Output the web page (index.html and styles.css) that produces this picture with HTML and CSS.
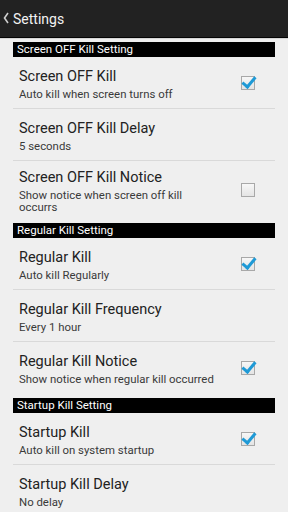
FILE: index.html
```html
<!DOCTYPE html>
<html lang="en">
<head>
    <meta charset="UTF-8">
    <meta name="viewport" content="width=device-width, initial-scale=1.0">
    <title>Settings</title>
    <link rel="stylesheet" href="styles.css">
</head>
<body>
    <div class="action-bar">
        <svg class="back" width="6" height="12" viewBox="0 0 6 12">
            <path d="M5 1 L1.5 6 L5 11" fill="none" stroke="#cfcfcf" stroke-width="1.6"/>
        </svg>
        <h1>Settings</h1>
    </div>

    <div class="section">
        <div class="section-header">Screen OFF Kill Setting</div>
        <div class="pref">
            <div class="pref-text">
                <div class="pref-title">Screen OFF Kill</div>
                <div class="pref-summary">Auto kill when screen turns off</div>
            </div>
            <span class="check checked"></span>
        </div>
        <div class="pref">
            <div class="pref-text">
                <div class="pref-title">Screen OFF Kill Delay</div>
                <div class="pref-summary">5 seconds</div>
            </div>
        </div>
        <div class="pref">
            <div class="pref-text">
                <div class="pref-title">Screen OFF Kill Notice</div>
                <div class="pref-summary">Show notice when screen off kill occurrs</div>
            </div>
            <span class="check"></span>
        </div>
    </div>

    <div class="section">
        <div class="section-header">Regular Kill Setting</div>
        <div class="pref">
            <div class="pref-text">
                <div class="pref-title">Regular Kill</div>
                <div class="pref-summary">Auto kill Regularly</div>
            </div>
            <span class="check checked"></span>
        </div>
        <div class="pref">
            <div class="pref-text">
                <div class="pref-title">Regular Kill Frequency</div>
                <div class="pref-summary">Every 1 hour</div>
            </div>
        </div>
        <div class="pref">
            <div class="pref-text">
                <div class="pref-title">Regular Kill Notice</div>
                <div class="pref-summary">Show notice when regular kill occurred</div>
            </div>
            <span class="check checked"></span>
        </div>
    </div>

    <div class="section">
        <div class="section-header">Startup Kill Setting</div>
        <div class="pref">
            <div class="pref-text">
                <div class="pref-title">Startup Kill</div>
                <div class="pref-summary">Auto kill on system startup</div>
            </div>
            <span class="check checked"></span>
        </div>
        <div class="pref">
            <div class="pref-text">
                <div class="pref-title">Startup Kill Delay</div>
                <div class="pref-summary">No delay</div>
            </div>
        </div>
    </div>
</body>
</html>
```

FILE: styles.css
```css
* {
    margin: 0;
    padding: 0;
    box-sizing: border-box;
    font-family: Roboto, 'Noto Sans', sans-serif;
}

body {
    background-color: #efefef;
    color: #1a1a1a;
    overflow: hidden;
}

.action-bar {
    height: 38px;
    background-color: #222222;
    border-bottom: 1px solid #050505;
    box-shadow: 0 1px 0 #d6d6d6;
    display: flex;
    align-items: center;
    padding-left: 3px;
}

.action-bar .back {
    margin-right: 4px;
    margin-top: -1px;
}

.action-bar h1 {
    color: #f2f2f2;
    font-size: 14px;
    font-weight: normal;
}

.section {
    margin: 4px 13px 0;
}

.section-header {
    height: 15px;
    background-color: #000;
    color: #fff;
    font-size: 11.5px;
    line-height: 15px;
    padding-left: 4px;
}

.pref {
    display: flex;
    align-items: center;
    min-height: 52px;
    padding: 6px 20px 6px 6px;
    border-bottom: 1px solid #d9d9d9;
}

.pref:last-child {
    border-bottom: none;
}

.pref-text {
    flex: 1;
    padding-right: 24px;
}

.pref-title {
    font-size: 14.5px;
    line-height: 22px;
    color: #222;
}

.pref-summary {
    font-size: 11.4px;
    line-height: 12px;
    color: #3a3a3a;
}

.check {
    position: relative;
    width: 14px;
    height: 14px;
    flex: none;
    border: 1px solid #a8a8a8;
    background: linear-gradient(#f7f7f7, #e4e4e4);
}

.check.checked::after {
    content: "";
    position: absolute;
    left: 3px;
    top: -3px;
    width: 5px;
    height: 11px;
    border-right: 3px solid #1f9ad6;
    border-bottom: 3px solid #1f9ad6;
    transform: rotate(40deg);
}
```
